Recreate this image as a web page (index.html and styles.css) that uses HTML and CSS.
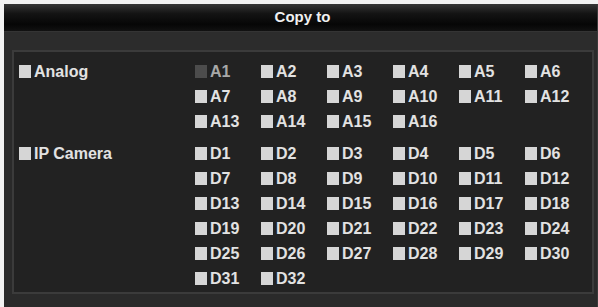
FILE: index.html
```html
<!DOCTYPE html>
<html lang="en">
<head>
  <meta charset="UTF-8">
  <title>Copy to</title>
  <link rel="stylesheet" href="styles.css">
</head>
<body>
  <div class="dialog">
    <header class="dialog-title">Copy to</header>
    <div class="dialog-strip"></div>

    <div class="copy-panel">
      <!-- Analog channels -->
      <div class="copy-group">
        <label class="group-label"><span class="box"></span>Analog</label>
        <div class="channel-grid">
          <span class="channel disabled"><span class="box"></span>A1</span>
          <span class="channel"><span class="box"></span>A2</span>
          <span class="channel"><span class="box"></span>A3</span>
          <span class="channel"><span class="box"></span>A4</span>
          <span class="channel"><span class="box"></span>A5</span>
          <span class="channel"><span class="box"></span>A6</span>
          <span class="channel"><span class="box"></span>A7</span>
          <span class="channel"><span class="box"></span>A8</span>
          <span class="channel"><span class="box"></span>A9</span>
          <span class="channel"><span class="box"></span>A10</span>
          <span class="channel"><span class="box"></span>A11</span>
          <span class="channel"><span class="box"></span>A12</span>
          <span class="channel"><span class="box"></span>A13</span>
          <span class="channel"><span class="box"></span>A14</span>
          <span class="channel"><span class="box"></span>A15</span>
          <span class="channel"><span class="box"></span>A16</span>
        </div>
      </div>

      <!-- IP channels -->
      <div class="copy-group">
        <label class="group-label"><span class="box"></span>IP Camera</label>
        <div class="channel-grid">
          <span class="channel"><span class="box"></span>D1</span>
          <span class="channel"><span class="box"></span>D2</span>
          <span class="channel"><span class="box"></span>D3</span>
          <span class="channel"><span class="box"></span>D4</span>
          <span class="channel"><span class="box"></span>D5</span>
          <span class="channel"><span class="box"></span>D6</span>
          <span class="channel"><span class="box"></span>D7</span>
          <span class="channel"><span class="box"></span>D8</span>
          <span class="channel"><span class="box"></span>D9</span>
          <span class="channel"><span class="box"></span>D10</span>
          <span class="channel"><span class="box"></span>D11</span>
          <span class="channel"><span class="box"></span>D12</span>
          <span class="channel"><span class="box"></span>D13</span>
          <span class="channel"><span class="box"></span>D14</span>
          <span class="channel"><span class="box"></span>D15</span>
          <span class="channel"><span class="box"></span>D16</span>
          <span class="channel"><span class="box"></span>D17</span>
          <span class="channel"><span class="box"></span>D18</span>
          <span class="channel"><span class="box"></span>D19</span>
          <span class="channel"><span class="box"></span>D20</span>
          <span class="channel"><span class="box"></span>D21</span>
          <span class="channel"><span class="box"></span>D22</span>
          <span class="channel"><span class="box"></span>D23</span>
          <span class="channel"><span class="box"></span>D24</span>
          <span class="channel"><span class="box"></span>D25</span>
          <span class="channel"><span class="box"></span>D26</span>
          <span class="channel"><span class="box"></span>D27</span>
          <span class="channel"><span class="box"></span>D28</span>
          <span class="channel"><span class="box"></span>D29</span>
          <span class="channel"><span class="box"></span>D30</span>
          <span class="channel"><span class="box"></span>D31</span>
          <span class="channel"><span class="box"></span>D32</span>
        </div>
      </div>
    </div>
  </div>
</body>
</html>
```

FILE: styles.css
```css
/* Colours for the dark DVR dialog */
:root {
  --page-bg: #f2f2f2;
  --window-bg: #2a2a2a;
  --window-edge: #3a3a3a;
  --panel-bg: #222222;
  --panel-border: #3b3b3b;
  --text: #e2e2e2;
  --text-dim: #a8a8a8;
  --box: #d6d6d6;
  --box-dim: #4c4c4c;
}

body {
  margin: 0;
  padding: 4px 0 0 4px;
  background: var(--page-bg);
  font-family: 'Liberation Sans', Arial, sans-serif;
  overflow: hidden;
}

.dialog {
  width: 594px;
  height: 303px;
  background: var(--window-bg);
  border-right: 1px solid var(--window-edge);
  box-sizing: border-box;
  display: flex;
  flex-direction: column;
}

/* Title bar */
.dialog-title {
  height: 27px;
  line-height: 25px;
  text-align: center;
  padding-left: 4px;
  color: #f0f0f0;
  font-size: 15px;
  font-weight: bold;
  background: linear-gradient(to bottom, #363636 0%, #141414 35%, #060606 75%, #111111 100%);
}

.dialog-strip {
  height: 19px;
  background: #2c2c2c;
  border-top: 1px solid #343434;
  box-sizing: border-box;
}

/* Channel panel */
.copy-panel {
  margin: 0 3px 0 8px;
  padding: 7px 0 1px 5px;
  background: var(--panel-bg);
  border: 2px solid var(--panel-border);
  display: flex;
  flex-direction: column;
  gap: 7px;
}

.copy-group {
  display: grid;
  grid-template-columns: 176px 1fr;
}

.group-label,
.channel {
  display: flex;
  align-items: center;
  height: 25px;
  color: var(--text);
  font-size: 16px;
  font-weight: bold;
  white-space: nowrap;
}

.group-label {
  align-self: start;
}

.channel-grid {
  display: grid;
  grid-template-columns: repeat(6, 66px);
}

.box {
  width: 12px;
  height: 13px;
  margin-right: 3px;
  background: var(--box);
  flex: none;
}

.channel.disabled {
  color: var(--text-dim);
}

.channel.disabled .box {
  background: var(--box-dim);
}
```
